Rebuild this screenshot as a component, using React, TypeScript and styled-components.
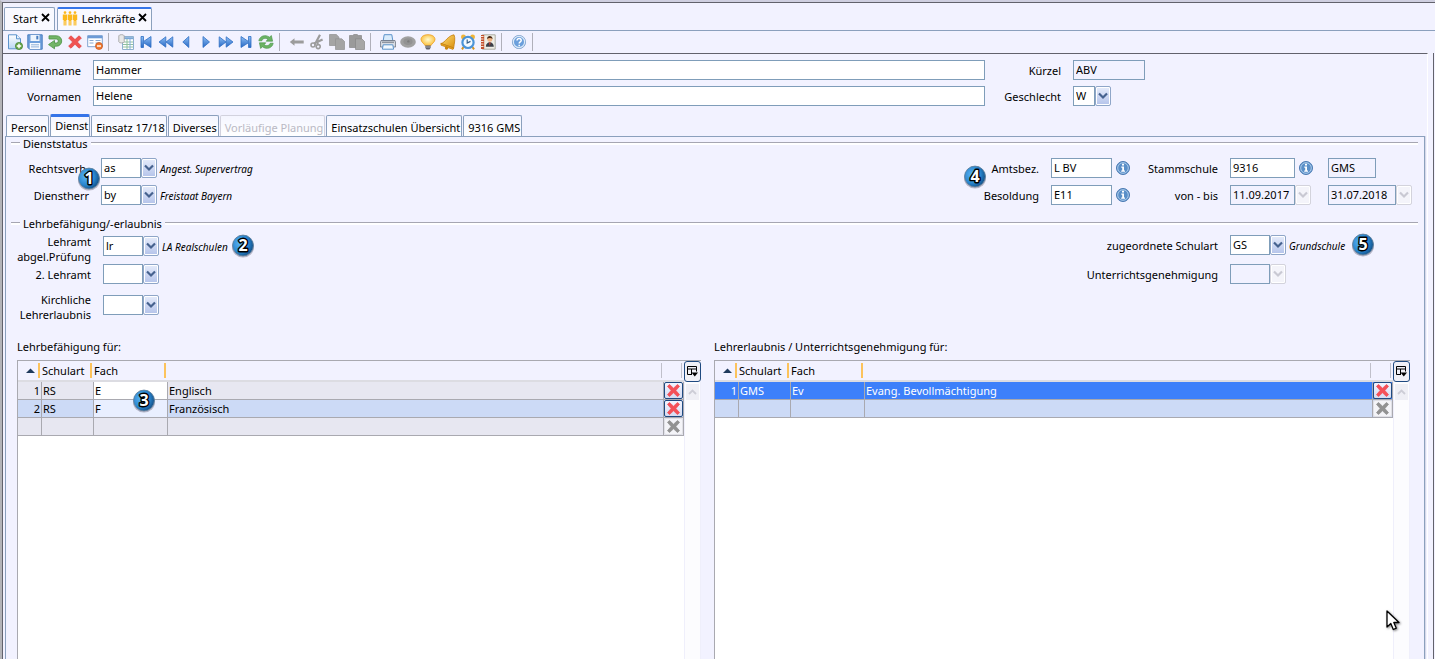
import React from "react";
import styled, { createGlobalStyle, css } from "styled-components";

const color = {
  page: "#f2f2ff",
  line: "#8ba0bd",
  field: "#7f9db9",
  rule: "#a6a6b2",
  dark: "#62626c",
  accent: "#3574e8",
  grid: "#a9a9b0",
};

const GlobalStyle = createGlobalStyle`
  * { box-sizing: border-box; }
  body {
    margin: 0;
    background: ${color.page};
    color: #000;
    font: 11px/15px "Noto Sans", "Open Sans", sans-serif;
  }
  button, input, select { font: inherit; color: inherit; margin: 0; }
  button { cursor: pointer; }
`;

/* ---------- window frame ---------- */

const Window = styled.div`
  position: relative;
  display: flex;
  min-height: 100vh;
  border-top: 2px solid #cfcfe0;
  border-left: 2px solid #b4b4b8;
`;

const Frame = styled.main`
  flex: 1;
  display: flex;
  flex-direction: column;
  min-width: 0;
  border-top: 1px solid ${color.dark};
  border-left: 1px solid ${color.dark};
`;

const Body = styled.div`
  flex: 1;
  display: flex;
  margin-right: 1px;
  border-right: 1px solid ${color.dark};
`;

const Content = styled.div`
  flex: 1;
  min-width: 0;
  display: flex;
  flex-direction: column;
  margin-right: 5px;
  padding: 0 2px 0 2px;
  border-top: 1px solid ${color.dark};
  border-right: 1px solid #fff;
`;

/* ---------- document tabs ---------- */

const DocTabs = styled.nav`
  display: flex;
  gap: 2px;
  padding: 4px 1px 0;
  height: 28px;
  border-bottom: 1px solid ${color.line};
`;

const DocTab = styled.div<{ $active?: boolean }>`
  display: flex;
  align-items: center;
  gap: 3px;
  height: 23px;
  padding: 0 4px 2px ${(p) => (p.$active ? 4 : 8)}px;
  border: 1px solid ${color.line};
  border-bottom: 0;
  border-radius: 2px 2px 0 0;
  background: #f9f9ff;
  ${(p) => p.$active && css`border-top: 2px solid ${color.accent};`}
`;

const TabLabel = styled.button`
  display: flex;
  align-items: center;
  gap: 4px;
  padding: 0;
  border: 0;
  background: none;
`;

const CloseButton = styled.button`
  display: flex;
  padding: 0 0 2px;
  border: 0;
  background: none;
`;

/* ---------- toolbar ---------- */

const Toolbar = styled.div`
  display: flex;
  align-items: center;
  height: 22px;
  padding-left: 2px;
`;

const ToolButton = styled.button`
  display: flex;
  align-items: center;
  justify-content: center;
  width: 20px;
  height: 20px;
  padding: 0;
  border: 0;
  background: none;
`;

const ToolSeparator = styled.span`
  width: 11px;
  height: 18px;
  padding-left: 3px;
  &::before {
    content: "";
    display: block;
    width: 1px;
    height: 100%;
    background: #b0b0ba;
  }
`;

/* ---------- fields ---------- */

const TextField = styled.input<{ $w?: number }>`
  width: ${(p) => (p.$w ? `${p.$w}px` : "100%")};
  height: 20px;
  padding: 0 3px 1px 2px;
  border: 1px solid ${color.field};
  border-radius: 0;
  background: #fff;
  outline: 0;
  &:read-only { background: ${color.page}; }
`;

const ComboBox = styled.span<{ $w: number }>`
  display: inline-grid;
  grid-template-columns: ${(p) => p.$w}px 16px;
  height: 20px;
`;

const ComboFace = styled.span<{ $off?: boolean }>`
  grid-area: 1 / 1;
  border: 1px solid ${color.field};
  background: ${(p) => (p.$off ? color.page : "#fff")};
`;

const ComboSelect = styled.select`
  grid-area: 1 / 1 / 2 / 3;
  z-index: 1;
  appearance: none;
  height: 20px;
  padding: 0 0 2px 3px;
  border: 0;
  background: none;
  outline: 0;
  opacity: 1;
  color: #000;
`;

const ComboArrow = styled.span<{ $off?: boolean }>`
  grid-area: 1 / 2;
  display: flex;
  align-items: center;
  justify-content: center;
  border: 1px solid ${(p) => (p.$off ? "#d3d3dc" : "#8fa6c8")};
  border-radius: 2px;
  box-shadow: inset 0 0 0 1px #fff;
  background: ${(p) => (p.$off ? "#f4f4fa" : "linear-gradient(#e6ecfb, #b4c3ea)")};
`;

const Label = styled.label`
  text-align: right;
  white-space: nowrap;
`;

const Hint = styled.em`
  padding: 2px 0 0 3px;
  font: italic 10px/15px "Noto Sans", "Open Sans", sans-serif;
  white-space: nowrap;
`;

const InfoButton = styled.button`
  display: flex;
  padding: 0;
  border: 0;
  background: none;
`;

/* ---------- person header ---------- */

const PersonForm = styled.div`
  display: grid;
  grid-template-columns: 76px minmax(0, 1fr) 76px 364px;
  align-items: center;
  row-gap: 6px;
  padding: 6px 0 8px;
`;

const PersonCell = styled.div`
  display: flex;
  padding-left: 12px;
`;

/* ---------- inner tabs ---------- */

const InnerTabs = styled.nav`
  display: flex;
  align-items: flex-end;
  gap: 1px;
  padding-left: 1px;
`;

const InnerTab = styled.button<{ $active?: boolean }>`
  height: ${(p) => (p.$active ? 22 : 21)}px;
  padding: ${(p) => (p.$active ? 0 : 2)}px 1px 0 4px;
  border: 1px solid ${color.line};
  border-bottom: 0;
  border-radius: 2px 2px 0 0;
  background: linear-gradient(#f4f5ff, #fff);
  white-space: nowrap;
  ${(p) => p.$active && css`
    padding-bottom: 2px;
    border-top: 3px solid ${color.accent};
  `}
  &:disabled {
    color: #b9b9c4;
    border-color: #d2d2de;
    cursor: default;
  }
`;

const Pane = styled.div`
  flex: 1;
  display: flex;
  flex-direction: column;
  border: 1px solid ${color.line};
  border-bottom: 0;
  box-shadow: 1px 0 0 #d6d9e8;
`;

/* ---------- groups ---------- */

const GroupTitle = styled.h2`
  display: flex;
  align-items: center;
  gap: 3px;
  margin: 0 6px 0 5px;
  font: inherit;
  height: 12px;
  &::before, &::after {
    content: "";
    height: 2px;
    border-top: 1px solid ${color.rule};
    background: #fff;
  }
  &::before { width: 9px; }
  &::after { flex: 1; }
`;

const Split = styled.div`
  display: flex;
  justify-content: space-between;
`;

const StatusRows = styled(Split)`
  padding: 9px 12px 12px 6px;
`;

const QualRows = styled(Split)`
  padding: 5px 12px 0 6px;
`;

const StatusLeft = styled.div`
  position: relative;
  display: grid;
  grid-template-columns: 77px auto;
  column-gap: 12px;
  row-gap: 7px;
  align-items: center;
  align-content: start;
`;

const StatusRight = styled.div`
  position: relative;
  display: grid;
  grid-template-columns: 75px 79px 76px 182px;
  column-gap: 12px;
  row-gap: 7px;
  align-items: center;
  align-content: start;
`;

const Inline = styled.div<{ $gap?: number }>`
  display: flex;
  align-items: center;
  gap: ${(p) => p.$gap ?? 0}px;
`;

const QualLeft = styled.div`
  display: grid;
  grid-template-columns: 79px auto;
  grid-template-rows: 30px 28px 34px;
  column-gap: 12px;
  align-items: start;
`;

const QualLabel = styled(Label)<{ $single?: boolean }>`
  padding-top: ${(p) => (p.$single ? 3 : 0)}px;
`;

const QualRight = styled.div`
  display: grid;
  grid-template-columns: auto 182px;
  grid-template-rows: 20px 20px;
  column-gap: 12px;
  row-gap: 9px;
  align-items: center;
  padding-top: 1px;
`;

const QualField = styled(Inline)<{ $top?: number }>`
  padding-top: ${(p) => p.$top ?? 0}px;
`;

const BadgeSlot = styled.span<{ $gap: number }>`
  display: flex;
  padding-left: ${(p) => p.$gap}px;
`;

const OverBadge = styled.span<{ $x: number; $y: number }>`
  position: absolute;
  left: ${(p) => p.$x}px;
  top: ${(p) => p.$y}px;
  display: flex;
`;

/* ---------- tables ---------- */

const TableArea = styled.div`
  flex: 1;
  display: grid;
  grid-template-columns: 684fr 696fr;
  grid-template-rows: auto 1fr;
  column-gap: 13px;
  row-gap: 6px;
  padding: 13px 14px 0 11px;
`;

const TableTitle = styled.h3`
  margin: 0;
  font: inherit;
`;

const TableBox = styled.div`
  position: relative;
  display: flex;
  min-width: 0;
  border-top: 1px solid ${color.grid};
  border-left: 1px solid ${color.grid};
  background: #fff;
`;

const TableMain = styled.div`
  flex: 1;
  min-width: 0;
`;

const DataTable = styled.table`
  width: 100%;
  table-layout: fixed;
  border-collapse: separate;
  border-spacing: 0;
`;

const HeadCell = styled.th<{ $w?: number }>`
  width: ${(p) => (p.$w ? `${p.$w}px` : "auto")};
  height: 21px;
  padding: 0 2px 0 0;
  border-bottom: 2px solid #dcdce2;
  background: ${color.page};
  font-weight: normal;
  text-align: left;
`;

const HeadInner = styled.span<{ $mark: "wide" | "thin"; $end?: boolean }>`
  display: flex;
  align-items: center;
  justify-content: ${(p) => (p.$end ? "flex-end" : "flex-start")};
  height: 15px;
  padding-right: ${(p) => (p.$end ? 3 : 0)}px;
  border-right: ${(p) => (p.$mark === "wide" ? "2px solid #fcc35c" : "1px solid #c0c0ca")};
`;

type Tone = "grey" | "blue" | "selected";
const tones: Record<Tone, { bg: string; edit: string; fg: string }> = {
  grey: { bg: "#e7e7f1", edit: "#fff", fg: "#000" },
  blue: { bg: "#ccdaf6", edit: "#e9efff", fg: "#000" },
  selected: { bg: "#3d80fa", edit: "#3d80fa", fg: "#fff" },
};

const Cell = styled.td<{ $tone: Tone; $edit?: boolean; $num?: boolean }>`
  height: 18px;
  padding: 0 1px;
  border-right: 1px solid ${color.grid};
  border-bottom: 1px solid ${color.grid};
  background: ${(p) => (p.$edit ? tones[p.$tone].edit : tones[p.$tone].bg)};
  color: ${(p) => tones[p.$tone].fg};
  text-align: ${(p) => (p.$num ? "right" : "left")};
  line-height: 15px;
  white-space: nowrap;
`;

const DeleteCell = styled(Cell)`
  padding: 0;
`;

const DeleteButton = styled.button`
  display: flex;
  align-items: center;
  justify-content: center;
  width: 100%;
  height: 17px;
  padding: 0;
  border: 1px solid #1f4a80;
  border-radius: 2px;
  background: linear-gradient(#f2f4ff, #d5dcf2);
  &:disabled { border-color: #e0e0e6; background: #f4f4f8; }
`;

const ScrollColumn = styled.div`
  display: flex;
  flex-direction: column;
  width: 17px;
  border-right: 1px solid #efeffb;
  border-left: 1px solid #efeffb;
  background: #fcfcfe;
`;

const ColumnsButton = styled.button`
  display: flex;
  align-items: center;
  justify-content: center;
  width: 17px;
  height: 21px;
  margin-left: -1px;
  padding: 0;
  border: 1px solid #1f4a80;
  border-radius: 3px;
  background: #f0f0f6;
`;

const ScrollUp = styled.button`
  display: flex;
  align-items: center;
  justify-content: center;
  height: 16px;
  margin: 2px 1px 0;
  padding: 0;
  border: 0;
  background: #efeff5;
`;

const Pointer = styled.svg`
  position: absolute;
  right: 35px;
  top: 608px;
  filter: drop-shadow(1px 1px 1px rgba(0, 0, 0, 0.5));
  pointer-events: none;
`;

/* ---------- drawings ---------- */

const HiddenSvg = styled.svg`
  position: absolute;
`;

const BadgeSvg = styled.svg`
  display: block;
  text {
    font: 700 16px "Open Sans", sans-serif;
    paint-order: stroke;
  }
`;

const Defs = () => (
  <HiddenSvg width="0" height="0" aria-hidden>
    <defs>
      <linearGradient id="gBlue" x1="0" y1="0" x2="0" y2="1">
        <stop offset="0" stopColor="#8fc0f5" />
        <stop offset="1" stopColor="#2767c4" />
      </linearGradient>
      <linearGradient id="gSheet" x1="0" y1="0" x2="0" y2="1">
        <stop offset="0" stopColor="#fff" />
        <stop offset="1" stopColor="#b9d6f3" />
      </linearGradient>
      <linearGradient id="gGold" x1="0" y1="0" x2="1" y2="1">
        <stop offset="0" stopColor="#ffe27a" />
        <stop offset="1" stopColor="#d98d0c" />
      </linearGradient>
      <radialGradient id="gBall" cx="0.35" cy="0.4" r="0.75">
        <stop offset="0" stopColor="#5cb4f4" />
        <stop offset="0.55" stopColor="#2a86cf" />
        <stop offset="1" stopColor="#0a3f72" />
      </radialGradient>
      <radialGradient id="gBulb" cx="0.5" cy="0.45" r="0.6">
        <stop offset="0" stopColor="#fffbd0" />
        <stop offset="1" stopColor="#fbb92c" />
      </radialGradient>
    </defs>
  </HiddenSvg>
);

const Badge = ({ n }: { n: number }) => (
  <BadgeSvg width="22" height="24" viewBox="0 0 22 24" aria-label={`Hinweis ${n}`}>
    <ellipse cx="11" cy="13" rx="11" ry="10.5" fill="#9a9aae" opacity="0.7" />
    <circle cx="11" cy="11.5" r="10.4" fill="url(#gBall)" stroke="#5d7f9c" strokeWidth="0.9" />
    <text x="11" y="17" textAnchor="middle" fill="#fff" stroke="#000" strokeWidth="2.8" strokeLinejoin="round">
      {n}
    </text>
  </BadgeSvg>
);

const InfoIcon = () => (
  <svg width="14" height="14" viewBox="0 0 14 14">
    <circle cx="7" cy="7" r="6.5" fill="#5a8fc8" stroke="#4a7ab2" />
    <circle cx="7" cy="7" r="5.3" fill="none" stroke="#b5d2ee" strokeWidth="0.9" />
    <path d="M6 2.8h2v1.7H6zM5.3 5.6H8v4h1v1.2H5.2V9.6h1V6.8h-.9z" fill="#fff" />
  </svg>
);

const Cross = ({ fill }: { fill: string }) => (
  <svg width="15" height="15" viewBox="0 0 15 15">
    <path d="M1.500 3.300 3.500 1.500 7.500 5.200 11.500 1.500 13.500 3.300 9.900 7.500 13.500 11.700 11.500 13.500 7.500 9.800 3.500 13.500 1.500 11.700 5.100 7.500z" fill={fill} stroke={fill} strokeLinejoin="round" strokeWidth="0.8" />
  </svg>
);

const CloseIcon = () => (
  <svg width="9" height="9" viewBox="0 0 9 9">
    <path d="M1 1l7 7M8 1 1 8" stroke="#000" strokeWidth="1.8" />
  </svg>
);

const Chevron = ({ off }: { off?: boolean }) => (
  <svg width="10" height="8" viewBox="0 0 10 8">
    <path d="M1 1.5l4 4 4-4" fill="none" stroke={off ? "#c9c9d3" : "#46628f"} strokeWidth="2.2" />
  </svg>
);

const PeopleIcon = () => (
  <svg width="16" height="15" viewBox="0 0 16 15" fill="#fcb81c">
    {[0, 5, 10].map((x) => (
      <path key={x} d={`M${x + 1.6} 1.6a1.4 1.4 0 1 1 2.8 0 1.4 1.4 0 0 1-2.8 0zM${x + 0.8} 3.6h4.4v5.4h-.8V14.500H${x + 3.3}v-4.500h-.6v4.500H${x + 1.6}V9H${x + 0.8}z`} />
    ))}
  </svg>
);

const Icon = ({ children }: { children: React.ReactNode }) => (
  <svg width="16" height="16" viewBox="0 0 16 16">{children}</svg>
);

const blue = { fill: "url(#gBlue)", stroke: "#2f6fc4", strokeWidth: 0.8, strokeLinejoin: "round" as const };
const grey = "#9c9c9c";

const icons: Record<string, React.ReactNode> = {
  Neu: (
    <>
      <path d="M1.5.8h8l4 4v10h-12z" fill="url(#gSheet)" stroke="#5b93cc" />
      <path d="M9.5.8v4h4" fill="#e7f2fd" stroke="#5b93cc" />
      <circle cx="12" cy="12" r="3.6" fill="#6aa84c" stroke="#3f7f2c" strokeWidth="0.7" />
      <path d="M12 9.8v4.4M9.8 12h4.4" stroke="#fff" strokeWidth="1.4" />
    </>
  ),
  Speichern: (
    <>
      <path d="M.8.8h14.4v14.4H2.6L.8 13.4z" fill="#6d9fdb" stroke="#4a7fc0" />
      <path d="M3.5 1h9v6h-9z" fill="#eef5fd" />
      <path d="M9.3 1.8h2v3.6h-2z" fill="#4a7fc0" />
      <path d="M2.8 9h10.4v6H2.8z" fill="#f5f9ff" />
      <path d="M4 10.8h8M4 12.9h8" stroke="#8fb1d8" />
    </>
  ),
  Rückgängig: (
    <path d="M2 1.800h7.500a5.200 5.200 0 0 1 0 10.400H7.500v2.600L1.500 10.600 7.500 6.400V9h1.800a2 2 0 0 0 0-4H2z" fill="#73b568" stroke="#4b9244" strokeWidth="0.8" strokeLinejoin="round" />
  ),
  Löschen: (
    <path d="M1.6 4 4 1.8l4 3.8 4-3.8L14.4 4l-4 4 4 4.2-2.4 2-4-4-4 4-2.4-2 4-4.2z" fill="#f05252" stroke="#e04040" strokeWidth="0.7" strokeLinejoin="round" />
  ),
  Maske: (
    <>
      <path d="M.7 1.7h14.6v11H.7z" fill="#fff" stroke="#7fa3d1" />
      <path d="M.7 1.7h14.6v2.6H.7z" fill="#6d9ad6" />
      <path d="M2.5 6.5h4M2.5 9h4M8.5 6.5h5M8.5 9h5" stroke="#88a8d0" />
      <circle cx="12" cy="12" r="3.5" fill="#ef7a32" stroke="#c8541a" strokeWidth="0.7" />
      <path d="M10 12h4" stroke="#fff" strokeWidth="1.4" />
    </>
  ),
  Datenblatt: (
    <>
      <path d="M4.5 2.5h11v13h-11z" fill="#fff" stroke="#8fb0cf" />
      <path d="M5 3.2h10v2H5z" fill="#7aa7d6" />
      <path d="M5 8h10M5 10.5h10M5 13h10M9 5v10" stroke="#8fc0a0" />
      <path d="M12 5v10" stroke="#88aee0" />
      <path d="M.8 1.800C.8.3 6.200.3 6.200 1.800v6c0 1.500-5.400 1.500-5.400 0z" fill="#e8e8e8" stroke="#9d9d9d" strokeWidth="0.8" />
    </>
  ),
  Erster: <path d="M3 2.5h2.5v5L13 2.5v11L5.5 8.7v4.8H3z" {...blue} />,
  "Zurück blättern": <path d="M7.8 2.8v10.4L1 8zM14.8 2.8v10.4L8 8z" {...blue} />,
  Voriger: <path d="M10.8 2.5v11L4.8 8z" {...blue} />,
  Nächster: <path d="M5 2.500v11L11.500 8z" {...blue} />,
  "Vor blättern": <path d="M1.2 2.8v10.4L8 8zM8.200 2.8v10.4L15 8z" {...blue} />,
  Letzter: <path d="M13 2.5h-2.500v5L3 2.500v11l7.500-4.800v4.800H13z" {...blue} />,
  Aktualisieren: (
    <g fill="#6cb365" stroke="#42903f" strokeWidth="0.6" strokeLinejoin="round">
      <path d="M.8 6.800C1.800 1.600 7.600.2 11.400 3.200L13.400 1.600 14.600 7.200H8.200l1.700-2C7.300 3.600 4.600 4.400 3.800 6.800z" />
      <path d="M15.200 9.200C14.200 14.400 8.400 15.800 4.600 12.800L2.600 14.400 1.400 8.800h6.400l-1.700 2c2.600 1.600 5.300.8 6.100-1.600z" />
    </g>
  ),
  Zurück: <path d="M.8 8l4.700-3.800v2.200h9.200v3.2H5.500v2.200z" fill={grey} />,
  Ausschneiden: (
    <g fill="none" stroke={grey}>
      <path d="M11 .8 5.8 10.5M13.6 5.4 5 9.4" strokeWidth="2.2" />
      <circle cx="4" cy="11" r="2" strokeWidth="1.6" />
      <circle cx="9.2" cy="12.6" r="2" strokeWidth="1.6" />
      <path d="M8 6.5 9.2 11" strokeWidth="1.6" />
    </g>
  ),
  Kopieren: (
    <g fill="#a4a4a4" stroke="#909090" strokeWidth="0.7">
      <path d="M.5.5h6.8L10 3.2v8.3H.5z" />
      <path d="M6.5 4.8h6.3l2.7 2.7v8H6.5z" />
    </g>
  ),
  Einfügen: (
    <g fill="#9a9a9a" stroke="#868686" strokeWidth="0.7">
      <path d="M.5 1.5h3L5 .5h3l1.5 1h3v12H.5z" />
      <path d="M6.5 4.8h6.3l2.7 2.7v8H6.5z" fill="#a6a6a6" />
    </g>
  ),
  Drucken: (
    <>
      <path d="M4.2.7h7.6l1 6H3.2z" fill="#d9ebfb" stroke="#5c93ca" />
      <path d="M1 6.5h14l.6 2.5v4H.4V9z" fill="#d7dbe3" stroke="#69717f" strokeWidth="0.8" />
      <path d="M2 8.2h12" stroke="#6e7683" />
      <path d="M3.2 10.8h9.6l.8 4.4H2.4z" fill="#f4f9ff" stroke="#5c93ca" />
    </>
  ),
  Ansicht: (
    <>
      <ellipse cx="8" cy="8" rx="7.8" ry="5.8" fill="#a0a0a0" />
      <ellipse cx="8" cy="7.600" rx="4.6" ry="3.400" fill="#929292" />
      <circle cx="8.4" cy="7.4" r="1.2" fill="#7c7c7c" />
    </>
  ),
  Tipp: (
    <>
      <path d="M8 .7C3.500.7 1 2.800 1 5.400c0 2.800 3.400 4.200 4 6.200h6c.6-2 4-3.400 4-6.200C15 2.800 12.500.7 8 .7z" fill="url(#gBulb)" stroke="#eba02a" strokeWidth="0.8" />
      <path d="M5.3 11.4h5.4v2.3L9.5 15.5h-3l-1.2-1.8z" fill="#63636b" />
      <path d="M5.3 13h5.4" stroke="#c4c4cc" strokeWidth="0.7" />
    </>
  ),
  Erinnerung: (
    <>
      <path d="M14 .8c1.6 3.6.4 8.4-.4 13.400L1 9.600C5.500 8.400 7.500 1.800 14 .8z" fill="url(#gGold)" stroke="#c47f0e" strokeWidth="0.8" />
      <path d="M.8 9.200 13.800 14l-.8 1.400L1 11.200z" fill="#e9a21d" stroke="#b9770c" strokeWidth="0.6" />
      <circle cx="6.500" cy="14" r="1.700" fill="#c9860f" />
    </>
  ),
  Wecker: (
    <>
      <circle cx="3.400" cy="3" r="2.400" fill="#f0b436" />
      <circle cx="12.600" cy="3" r="2.400" fill="#f0b436" />
      <path d="M3.500 13 2 15.400M12.500 13l1.500 2.400" stroke="#d8921c" strokeWidth="2" />
      <circle cx="8" cy="8.400" r="5.600" fill="#f4faff" stroke="#4b94d8" strokeWidth="2.200" />
      <path d="M7.200 5.600V9l3.300-1.600" fill="none" stroke="#34608c" strokeWidth="1.200" />
    </>
  ),
  Adressbuch: (
    <>
      <path d="M2.500.8h12.700v14.400H2.500z" fill="#eeeee6" stroke="#9a9a8e" strokeWidth="0.8" />
      <path d="M1 1h3.200v14H1z" fill="#c4512c" />
      <path d="M.5 2.500h3M.5 5h3M.5 7.500h3M.5 10h3M.5 12.500h3" stroke="#f4e3d8" />
      <circle cx="9.800" cy="5.300" r="2.500" fill="#f0b384" />
      <path d="M7 5c0-4 5.600-4 5.600 0-1.400-1.200-4-1.200-5.600 0z" fill="#4d2a14" />
      <path d="M5.800 12.800c0-6 8-6 8 0z" fill="#3c4048" />
      <path d="M9 8.500h1.600l-.8 3.600z" fill="#d84132" />
    </>
  ),
  Hilfe: (
    <>
      <circle cx="8" cy="8" r="6.600" fill="#6b9fdc" stroke="#7d9fc8" strokeWidth="0.800" />
      <circle cx="8" cy="8" r="5.600" fill="none" stroke="#dbe9f8" strokeWidth="1.200" />
      <path d="M6 6.600c0-2.800 4.200-2.600 4.200-.2 0 1.600-2 1.500-2 3.200M8.200 10.800v1.500" fill="none" stroke="#fff" strokeWidth="1.500" />
    </>
  ),
};

const toolGroups = [
  ["Neu", "Speichern", "Rückgängig", "Löschen", "Maske"],
  ["Datenblatt", "Erster", "Zurück blättern", "Voriger", "Nächster", "Vor blättern", "Letzter", "Aktualisieren"],
  ["Zurück", "Ausschneiden", "Kopieren", "Einfügen"],
  ["Drucken", "Ansicht", "Tipp", "Erinnerung", "Wecker", "Adressbuch"],
  ["Hilfe"],
];

/* ---------- composed parts ---------- */

const Combo = ({ id, value, w, off, label }: { id: string; value: string; w: number; off?: boolean; label?: string }) => (
  <ComboBox $w={w}>
    <ComboFace $off={off} />
    <ComboArrow $off={off}><Chevron off={off} /></ComboArrow>
    <ComboSelect id={id} defaultValue={value} disabled={off} aria-label={label}>
      <option value={value}>{value}</option>
    </ComboSelect>
  </ComboBox>
);

const Info = () => (
  <InfoButton type="button" aria-label="Information"><InfoIcon /></InfoButton>
);

type Row = { n: string; art: string; fach: string; name: string; tone: Tone; empty?: boolean };

const SubjectTable = ({ rows, editable, children }: { rows: Row[]; editable?: boolean; children?: React.ReactNode }) => (
  <TableBox>
    <TableMain>
      <DataTable>
        <thead>
          <tr>
            <HeadCell $w={24}>
              <HeadInner $mark="wide" $end aria-label="Nummer, aufsteigend">
                <svg width="9" height="5" viewBox="0 0 9 5"><path d="M0 5 4.500.500 9 5z" fill="#1f3a5c" /></svg>
              </HeadInner>
            </HeadCell>
            <HeadCell $w={52}><HeadInner $mark="wide">Schulart</HeadInner></HeadCell>
            <HeadCell $w={74}><HeadInner $mark="wide">Fach</HeadInner></HeadCell>
            <HeadCell><HeadInner $mark="thin" /></HeadCell>
            <HeadCell $w={20}><HeadInner $mark="thin" /></HeadCell>
          </tr>
        </thead>
        <tbody>
          {rows.map((r, i) => (
            <tr key={i}>
              <Cell $tone={r.tone} $num>{r.n}</Cell>
              <Cell $tone={r.tone}>{r.art}</Cell>
              <Cell $tone={r.tone} $edit={editable && !r.empty}>{r.fach}</Cell>
              <Cell $tone={r.tone}>{r.name}</Cell>
              <DeleteCell $tone={r.tone}>
                <DeleteButton type="button" disabled={r.empty} aria-label="Zeile löschen">
                  <Cross fill={r.empty ? "#929292" : "#f45058"} />
                </DeleteButton>
              </DeleteCell>
            </tr>
          ))}
        </tbody>
      </DataTable>
    </TableMain>
    <ScrollColumn>
      <ColumnsButton type="button" aria-label="Spalten wählen">
        <svg width="11" height="11" viewBox="0 0 11 11">
          <path d="M.5 8.500V.5h9v5M.5 3h9M.5 8.500H5M4.500 3v5.500" fill="none" stroke="#000" />
          <path d="M4.500 6.500h6.500L7.800 10.500z" />
        </svg>
      </ColumnsButton>
      <ScrollUp type="button" aria-label="Nach oben">
        <svg width="9" height="6" viewBox="0 0 9 6"><path d="M1 5l3.500-3.500L8 5" fill="none" stroke="#cdcdd6" strokeWidth="1.800" /></svg>
      </ScrollUp>
    </ScrollColumn>
    {children}
  </TableBox>
);

const leftRows: Row[] = [
  { n: "1", art: "RS", fach: "E", name: "Englisch", tone: "grey" },
  { n: "2", art: "RS", fach: "F", name: "Französisch", tone: "blue" },
  { n: "", art: "", fach: "", name: "", tone: "grey", empty: true },
];

const rightRows: Row[] = [
  { n: "1", art: "GMS", fach: "Ev", name: "Evang. Bevollmächtigung", tone: "selected" },
  { n: "", art: "", fach: "", name: "", tone: "blue", empty: true },
];

const innerTabs = ["Person", "Dienst", "Einsatz 17/18", "Diverses", "Vorläufige Planung", "Einsatzschulen Übersicht", "9316 GMS"];

export default function App() {
  return (
    <Window>
      <GlobalStyle />
      <Defs />
      <Frame>
        <DocTabs>
          <DocTab>
            <TabLabel type="button">Start</TabLabel>
            <CloseButton type="button" aria-label="Start schließen"><CloseIcon /></CloseButton>
          </DocTab>
          <DocTab $active>
            <TabLabel type="button"><PeopleIcon />Lehrkräfte</TabLabel>
            <CloseButton type="button" aria-label="Lehrkräfte schließen"><CloseIcon /></CloseButton>
          </DocTab>
        </DocTabs>
        <Toolbar>
          {toolGroups.map((group, i) => (
            <React.Fragment key={i}>
              {group.map((name) => (
                <ToolButton type="button" key={name} aria-label={name}><Icon>{icons[name]}</Icon></ToolButton>
              ))}
              <ToolSeparator />
            </React.Fragment>
          ))}
        </Toolbar>
        <Body>
          <Content>
            <PersonForm>
              <Label htmlFor="familienname">Familienname</Label>
              <PersonCell><TextField id="familienname" defaultValue="Hammer" /></PersonCell>
              <Label htmlFor="kuerzel">Kürzel</Label>
              <PersonCell><TextField id="kuerzel" $w={72} defaultValue="ABV" readOnly /></PersonCell>
              <Label htmlFor="vornamen">Vornamen</Label>
              <PersonCell><TextField id="vornamen" defaultValue="Helene" /></PersonCell>
              <Label htmlFor="geschlecht">Geschlecht</Label>
              <PersonCell><Combo id="geschlecht" value="W" w={22} /></PersonCell>
            </PersonForm>
            <InnerTabs>
              {innerTabs.map((t) => (
                <InnerTab type="button" key={t} $active={t === "Dienst"} disabled={t === "Vorläufige Planung"}>{t}</InnerTab>
              ))}
            </InnerTabs>
            <Pane>
              <GroupTitle>Dienststatus</GroupTitle>
              <StatusRows>
                <StatusLeft>
                  <Label htmlFor="rechtsverh">Rechtsverh.</Label>
                  <Inline><Combo id="rechtsverh" value="as" w={40} /><Hint>Angest. Supervertrag</Hint></Inline>
                  <Label htmlFor="dienstherr">Dienstherr</Label>
                  <Inline><Combo id="dienstherr" value="by" w={40} /><Hint>Freistaat Bayern</Hint></Inline>
                  <OverBadge $x={66} $y={9}><Badge n={1} /></OverBadge>
                </StatusLeft>
                <StatusRight>
                  <Label htmlFor="amtsbez">Amtsbez.</Label>
                  <Inline $gap={4}><TextField id="amtsbez" $w={61} defaultValue="L BV" /><Info /></Inline>
                  <Label htmlFor="stammschule">Stammschule</Label>
                  <Inline $gap={15}>
                    <Inline $gap={4}><TextField id="stammschule" $w={65} defaultValue="9316" /><Info /></Inline>
                    <TextField $w={48} defaultValue="GMS" readOnly aria-label="Schulart der Stammschule" />
                  </Inline>
                  <Label htmlFor="besoldung">Besoldung</Label>
                  <Inline $gap={4}><TextField id="besoldung" $w={61} defaultValue="E11" /><Info /></Inline>
                  <Label htmlFor="von">von - bis</Label>
                  <Inline $gap={17}>
                    <Combo id="von" value="11.09.2017" w={65} off />
                    <Combo id="bis" value="31.07.2018" w={68} off label="bis" />
                  </Inline>
                  <OverBadge $x={0} $y={7}><Badge n={4} /></OverBadge>
                </StatusRight>
              </StatusRows>
              <GroupTitle>Lehrbefähigung/-erlaubnis</GroupTitle>
              <QualRows>
                <QualLeft>
                  <QualLabel htmlFor="lehramt">Lehramt<br />abgel.Prüfung</QualLabel>
                  <Inline><Combo id="lehramt" value="lr" w={40} /><Hint>LA Realschulen</Hint><BadgeSlot $gap={4}><Badge n={2} /></BadgeSlot></Inline>
                  <QualLabel $single htmlFor="lehramt2">2. Lehramt</QualLabel>
                  <Inline><Combo id="lehramt2" value="" w={40} /></Inline>
                  <QualLabel htmlFor="kirchlich">Kirchliche<br />Lehrerlaubnis</QualLabel>
                  <QualField $top={3}><Combo id="kirchlich" value="" w={40} /></QualField>
                </QualLeft>
                <div>
                  <QualRight>
                    <Label htmlFor="schulart">zugeordnete Schulart</Label>
                    <Inline><Combo id="schulart" value="GS" w={40} /><Hint>Grundschule</Hint><BadgeSlot $gap={7}><Badge n={5} /></BadgeSlot></Inline>
                    <Label htmlFor="genehmigung">Unterrichtsgenehmigung</Label>
                    <Inline><Combo id="genehmigung" value="" w={40} off /></Inline>
                  </QualRight>
                </div>
              </QualRows>
              <TableArea>
                <TableTitle>Lehrbefähigung für:</TableTitle>
                <TableTitle>Lehrerlaubnis / Unterrichtsgenehmigung für:</TableTitle>
                <SubjectTable rows={leftRows} editable>
                  <OverBadge $x={115} $y={28}><Badge n={3} /></OverBadge>
                </SubjectTable>
                <SubjectTable rows={rightRows} />
              </TableArea>
            </Pane>
          </Content>
        </Body>
      </Frame>
      <Pointer width="14" height="21" viewBox="0 0 14 21">
        <path d="M1 1v16l3.800-3.500L7.300 19.500l3-1.300L7.800 12.500H13z" fill="#fff" stroke="#000" strokeWidth="1.300" strokeLinejoin="round" />
      </Pointer>
    </Window>
  );
}
